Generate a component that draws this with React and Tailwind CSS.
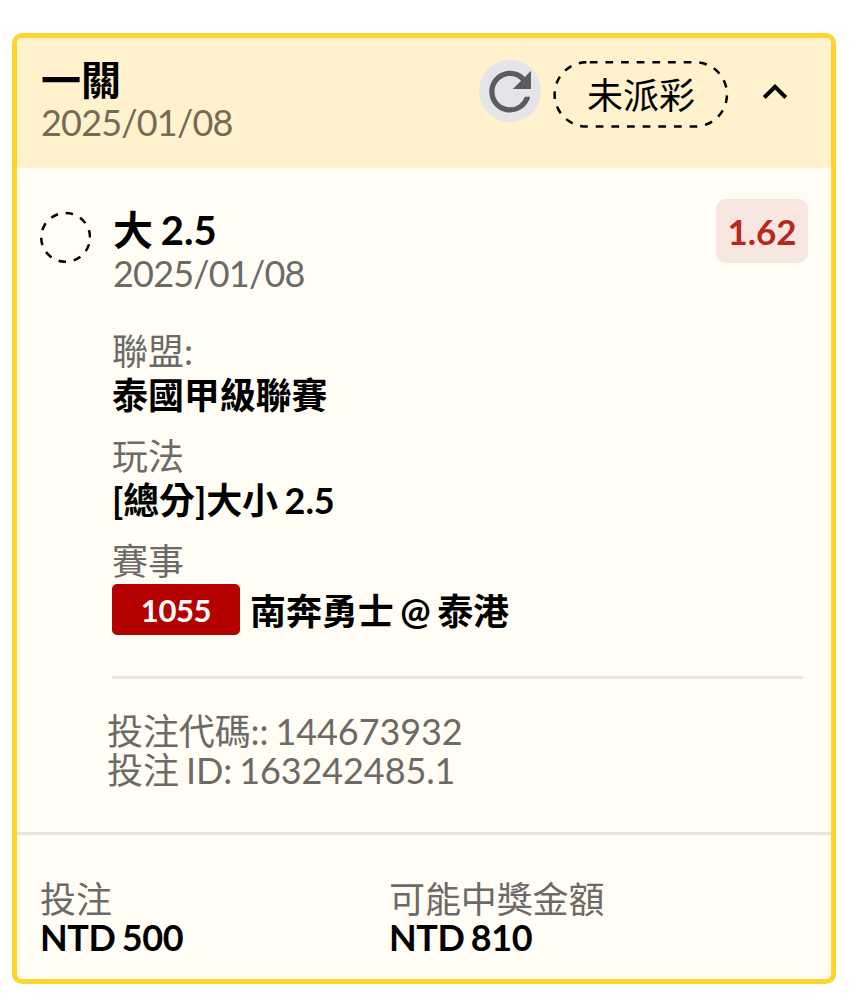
import clsx from 'clsx';

const details = [
  { label: '聯盟:', value: '泰國甲級聯賽' },
  { label: '玩法', value: '[總分]大小 2.5' },
];

const RefreshIcon = () => (
  <svg viewBox="0.05 -0.15 23.8 23.8" className="h-[62px] w-[62px]" fill="#5b5c5e">
    <path d="M17.65 6.35A7.95 7.95 0 0 0 12 4c-4.42 0-7.99 3.58-7.99 8s3.57 8 7.99 8c3.73 0 6.84-2.55 7.73-6h-2.08A5.99 5.99 0 0 1 12 18c-3.31 0-6-2.69-6-6s2.69-6 6-6c1.66 0 3.14.69 4.22 1.78L13 11h7V4l-2.35 2.35z" />
  </svg>
);

const StatusPill = ({ children }) => (
  <div className="relative flex h-[67px] w-[176px] items-center justify-center">
    <svg className="absolute inset-0 h-full w-full" viewBox="0 0 176 67">
      <rect
        x="1.6"
        y="1.2"
        width="172.4"
        height="64.4"
        rx="32.2"
        fill="none"
        stroke="black"
        strokeWidth="2.5"
        strokeDasharray="7.7 7.95"
        strokeDashoffset="-3"
      />
    </svg>
    <span className="pt-px text-[36px] leading-[44px] text-black">{children}</span>
  </div>
);

const DashedCircle = () => (
  <svg viewBox="0 0 52 52" className="mt-[43px] h-[52px] w-[52px] shrink-0">
    <circle
      cx="26.6"
      cy="26.4"
      r="24.4"
      fill="none"
      stroke="black"
      strokeWidth="2.5"
      strokeDasharray="7.5 7.83"
      strokeDashoffset="-7"
    />
  </svg>
);

const Field = ({ label, value, className }) => (
  <div className={clsx('text-[36px]', className)}>
    <div className="h-[44px] leading-[44px] text-[#6b6a66]">{label}</div>
    <div className="h-[44px] leading-[44px] font-bold tracking-[-0.1px] text-black">{value}</div>
  </div>
);

const App = () => {
  return (
    <div className="flex h-[1000px] w-[854px] bg-white pt-[33px] pl-3 font-['Lato','Noto_Sans_CJK_TC',sans-serif] [word-spacing:-2px] whitespace-nowrap">
      <div className="flex h-[951px] w-[824px] flex-col overflow-hidden rounded-[10px] border-[5px] border-[#fdd52e] bg-[#fffdf4]">
        <header className="flex h-[130px] shrink-0 bg-[#fff2cc] pl-6">
          <div className="w-[438px] pt-[19px]">
            <div className="h-[44px] text-[40px] leading-[46px] font-bold text-black">一關</div>
            <div className="h-[42px] text-[36px] leading-[42px] tracking-[-0.8px] text-[#756b54]">2025/01/08</div>
          </div>
          <button className="mt-[22px] h-[62px] w-[62px] rounded-full bg-[#e4e5e8]">
            <RefreshIcon />
          </button>
          <div className="mt-[23px] ml-3">
            <StatusPill>未派彩</StatusPill>
          </div>
          <svg viewBox="0 0 26 18" className="mt-[45px] ml-[33px] h-[18px] w-[26px]">
            <path d="M2.2 14.5L13 3.8L23.8 14.5" fill="none" stroke="black" strokeWidth="4" />
          </svg>
        </header>

        <section className="flex h-[667px] shrink-0 border-b-[3px] border-[#e8e5de] pl-[22px]">
          <DashedCircle />
          <div className="ml-[21px] w-[696px]">
            <div className="flex justify-between pt-[31px]">
              <div className="pt-[9px] pl-px">
                <div className="h-[44px] text-[40px] leading-[44px] font-bold text-black">大 2.5</div>
                <div className="h-[42px] text-[36px] leading-[42px] tracking-[-0.8px] text-[#6b6a66]">2025/01/08</div>
              </div>
              <div className="flex h-16 w-[92px] items-center justify-center rounded-[10px] bg-[#f8e6e0] pt-px text-[35px] font-bold text-[#b92620]">
                1.62
              </div>
            </div>

            <div className="mt-[35px] flex flex-col gap-[17px]">
              {details.map((item) => (
                <Field key={item.label} {...item} />
              ))}
              <div className="text-[36px]">
                <div className="h-[45px] leading-[44px] text-[#6b6a66]">賽事</div>
                <div className="flex items-center">
                  <span className="flex h-[51px] w-[128px] items-center justify-center rounded-[5px] bg-[#b50000] pt-px text-[31px] font-bold tracking-[-0.4px] text-white">
                    1055
                  </span>
                  <span className="ml-[10px] pt-[3px] leading-[48px] font-bold tracking-[-0.1px] text-black">
                    南奔勇士 @ 泰港
                  </span>
                </div>
              </div>
            </div>

            <div className="mt-[41px] w-[691px] border-t-[3px] border-[#e8e5de]" />
            <div className="-ml-[5px] mt-[33px] text-[36px] leading-[39px] tracking-[-0.1px] text-[#6b6a66]">
              <div>投注代碼:: 144673932</div>
              <div>投注 ID: 163242485.1</div>
            </div>
          </div>
        </section>

        <footer className="flex pt-[45px] pl-[23px] text-[36px]">
          <div className="w-[349px]">
            <div className="h-[38px] leading-[39px] text-[#6b6a66]">投注</div>
            <div className="leading-[38px] font-bold tracking-[-0.4px] text-black">NTD 500</div>
          </div>
          <div>
            <div className="h-[38px] leading-[39px] tracking-[-0.1px] text-[#6b6a66]">可能中獎金額</div>
            <div className="leading-[38px] font-bold tracking-[-0.4px] text-black">NTD 810</div>
          </div>
        </footer>
      </div>
    </div>
  );
};

export default App;
